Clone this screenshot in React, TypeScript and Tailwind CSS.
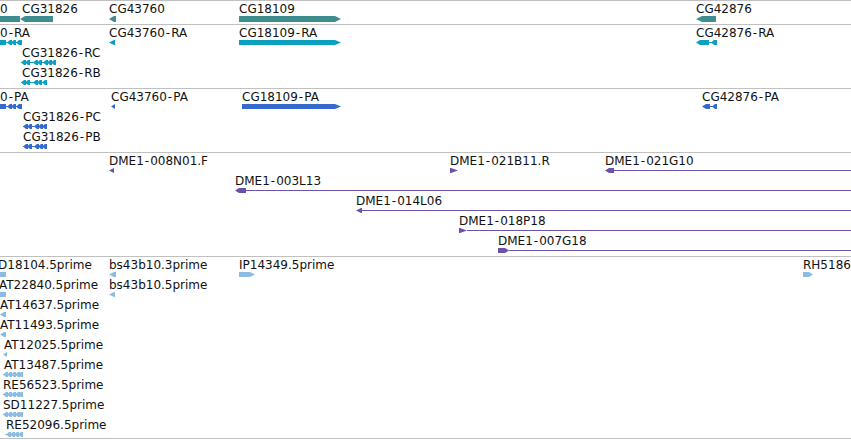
type Part =
  | ["b", number, number]
  | ["l", number, number, number]
  | ["r", number, number, number]
  | ["n", number, number];

type Feature = {
  x: number;
  label: string;
  dx?: number;
  h?: number;
  parts: Part[];
};

type Track = {
  fill: string;
  pad: string;
  rows: Feature[][];
};

// chevron run used by spliced transcripts (intron line + little arrowheads)
const chevrons = (offsets: number[], size = 5): Part[] => {
  const end = Math.max(...offsets) + size;
  return [["n", 0, end], ...offsets.map((o) => ["l", o, size, 3] as Part)];
};

const tracks: Track[] = [
  {
    fill: "fill-[#3f8e8f]",
    pad: "pb-[3px]",
    rows: [
      [
        { x: 0, label: "0", h: 6, parts: [["b", 0, 20]] },
        { x: 20, label: "CG31826", dx: 2, h: 6, parts: [["l", 0, 33, 5]] },
        { x: 109, label: "CG43760", h: 6, parts: [["l", 0, 7, 5]] },
        { x: 239, label: "CG18109", h: 6, parts: [["r", 0, 102, 6]] },
        { x: 696, label: "CG42876", h: 6, parts: [["l", 0, 20, 6]] },
      ],
    ],
  },
  {
    fill: "fill-[#0ba0c0]",
    pad: "pb-[3px]",
    rows: [
      [
        {
          x: 0,
          label: "0-RA",
          parts: [["b", 0, 6], ["n", 6, 16], ["l", 7, 5, 3], ["l", 11, 5, 3], ["l", 16, 6, 3]],
        },
        { x: 109, label: "CG43760-RA", parts: [["l", 0, 6, 5]] },
        { x: 239, label: "CG18109-RA", parts: [["r", 0, 102, 6]] },
        {
          x: 696,
          label: "CG42876-RA",
          parts: [["l", 0, 13, 4], ["n", 13, 3], ["l", 15, 6, 3]],
        },
      ],
      [{ x: 21, label: "CG31826-RC", dx: 1, parts: chevrons([0, 4, 12, 16, 22, 26, 30]) }],
      [{ x: 21, label: "CG31826-RB", dx: 1, parts: chevrons([0, 4, 12, 16, 21]) }],
    ],
  },
  {
    fill: "fill-[#3569cd]",
    pad: "pb-[3px]",
    rows: [
      [
        {
          x: 0,
          label: "0-PA",
          parts: [["b", 0, 6], ["n", 6, 16], ["l", 7, 5, 3], ["l", 11, 5, 3], ["l", 16, 6, 3]],
        },
        { x: 111, label: "CG43760-PA", parts: [["l", 0, 4, 4]] },
        { x: 242, label: "CG18109-PA", parts: [["r", 0, 99, 6]] },
        {
          x: 702,
          label: "CG42876-PA",
          parts: [["l", 0, 8, 4], ["n", 8, 3], ["l", 10, 5, 3]],
        },
      ],
      [{ x: 23, label: "CG31826-PC", parts: chevrons([0, 4, 11, 15, 19]) }],
      [{ x: 23, label: "CG31826-PB", parts: chevrons([0, 4, 11, 15, 19]) }],
    ],
  },
  {
    fill: "fill-[#6a53a6]",
    pad: "pb-[3px]",
    rows: [
      [
        { x: 109, label: "DME1-008N01.F", parts: [["l", 0, 5, 5]] },
        { x: 450, label: "DME1-021B11.R", parts: [["r", 0, 8, 7]] },
        { x: 605, label: "DME1-021G10", parts: [["l", 0, 9, 4], ["n", 9, 237]] },
      ],
      [{ x: 235, label: "DME1-003L13", parts: [["l", 0, 11, 4], ["n", 11, 605]] }],
      [{ x: 356, label: "DME1-014L06", parts: [["l", 0, 6, 5], ["n", 6, 489]] }],
      [{ x: 459, label: "DME1-018P18", parts: [["r", 0, 8, 7], ["n", 8, 384]] }],
      [{ x: 498, label: "DME1-007G18", parts: [["r", 0, 11, 4], ["n", 11, 342]] }],
    ],
  },
  {
    fill: "fill-[#8bbde2]",
    pad: "pb-px",
    rows: [
      [
        { x: 0, label: "D18104.5prime", dx: -2, parts: [["b", 0, 6]] },
        { x: 109, label: "bs43b10.3prime", parts: [["l", 0, 7, 5]] },
        { x: 239, label: "IP14349.5prime", parts: [["r", 0, 16, 5]] },
        { x: 803, label: "RH5186", parts: [["r", 0, 10, 4]] },
      ],
      [
        { x: 0, label: "AT22840.5prime", dx: -1, parts: [["b", 0, 6]] },
        { x: 109, label: "bs43b10.5prime", parts: [["l", 0, 6, 5]] },
      ],
      [{ x: 0, label: "AT14637.5prime", parts: [["l", 0, 6, 4]] }],
      [{ x: 0, label: "AT11493.5prime", parts: [["l", 0, 6, 4]] }],
      [{ x: 3, label: "AT12025.5prime", dx: 1, parts: [["l", 0, 4, 4]] }],
      [{ x: 3, label: "AT13487.5prime", dx: 1, parts: chevrons([0, 4, 8, 12, 15]) }],
      [{ x: 3, label: "RE56523.5prime", parts: chevrons([0, 4, 8, 12, 15]) }],
      [{ x: 3, label: "SD11227.5prime", parts: chevrons([0, 4, 8, 12, 15]) }],
      [{ x: 5, label: "RE52096.5prime", dx: 1, parts: chevrons([1, 5, 9, 13]) }],
    ],
  },
];

const Glyph = ({ parts, h, fill }: { parts: Part[]; h: number; fill: string }) => {
  const w = Math.max(...parts.map((p) => p[1] + p[2]));
  const mid = h / 2;
  return (
    <svg width={w} height={h} className={`block ${fill}`}>
      {parts.map((p, i) => {
        const [k, x, pw] = p;
        if (k === "b") return <rect key={i} x={x} y={0} width={pw} height={h} />;
        if (k === "n")
          return <rect key={i} x={x} y={Math.floor(mid)} width={pw} height={1} />;
        const t = p[3];
        const pts =
          k === "l"
            ? `${x},${mid} ${x + t},0 ${x + pw},0 ${x + pw},${h} ${x + t},${h}`
            : `${x},0 ${x + pw - t},0 ${x + pw},${mid} ${x + pw - t},${h} ${x},${h}`;
        return <polygon key={i} points={pts} />;
      })}
    </svg>
  );
};

// the dash in names gets a little breathing room
const Label = ({ text }: { text: string }) => {
  const bits = text.split("-");
  return (
    <>
      {bits.map((b, i) => (
        <span key={i}>
          {i > 0 && <span className="mx-px">-</span>}
          {b}
        </span>
      ))}
    </>
  );
};

const FeatureItem = ({ f, fill }: { f: Feature; fill: string }) => (
  <div className="absolute top-px flex flex-col items-start" style={{ left: f.x }}>
    <div
      className="h-[14px] whitespace-nowrap text-[12px] leading-[14px] text-[#111]"
      style={{ marginLeft: f.dx ?? 0 }}
    >
      <Label text={f.label} />
    </div>
    <Glyph parts={f.parts} h={f.h ?? 5} fill={fill} />
  </div>
);

export default function App() {
  return (
    <div className="w-[851px] h-[440px] overflow-hidden bg-white font-['DejaVu_Sans',sans-serif]">
      {tracks.map((t, ti) => (
        <div
          key={ti}
          className={`border-t border-[#c0c0c0] ${t.pad} ${
            ti === tracks.length - 1 ? "border-b" : ""
          }`}
        >
          {t.rows.map((row, ri) => (
            <div key={ri} className="relative h-5">
              {row.map((f) => (
                <FeatureItem key={f.label} f={f} fill={t.fill} />
              ))}
            </div>
          ))}
        </div>
      ))}
    </div>
  );
}
